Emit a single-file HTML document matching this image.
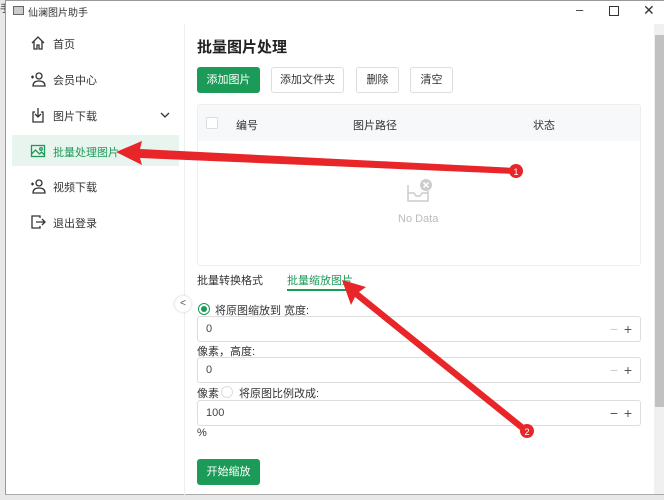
<!DOCTYPE html>
<html><head><meta charset="utf-8"><style>
*{margin:0;padding:0;box-sizing:border-box}
body{width:664px;height:500px;overflow:hidden;background:#e8e8e8;font-family:"Liberation Sans","Noto Sans CJK SC",sans-serif;position:relative;font-size:11px;color:#333}
.a{position:absolute}
.win{left:5px;top:0;width:659px;height:495px;background:#fff;border-left:1px solid #999;border-top:1px solid #999;border-bottom:1px solid #aaa}
.nav{left:30px;font-size:11px;color:#333}
.btn{position:absolute;top:67px;height:26px;border:1px solid #ddd;border-radius:3px;background:#fff;font-size:11px;line-height:24px;text-align:center;color:#333}
.inp{position:absolute;left:197px;width:444px;height:26px;border:1px solid #ddd;border-radius:3px;background:#fff;font-size:11px;line-height:24px;padding-left:8px;color:#444}
.inp span{position:absolute;right:8px;top:0;font-size:14px;color:#555}
.lbl{position:absolute;left:197px;font-size:11px;color:#333}
svg.i{position:absolute;width:16px;height:16px;fill:none;stroke:#333;stroke-width:1.3}
</style></head><body>
<div class="a" style="left:0;top:0;font-size:10px;color:#333">手</div>
<div class="a win"></div>
<div class="a" style="left:13px;top:6px;width:11px;height:9px;border:1px solid #666;background:#ccc"></div>
<div class="a" style="left:28px;top:4px;font-size:10px;color:#333">仙澜图片助手</div>
<div class="a" style="left:576px;top:2px;font-size:13px;color:#333">–</div>
<div class="a" style="left:609px;top:6px;width:10px;height:10px;border:1px solid #333"></div>
<div class="a" style="left:643px;top:2px;font-size:14px;color:#333">✕</div>
<div class="a" style="left:184px;top:24px;width:1px;height:471px;background:#eee"></div>
<div class="a" style="left:12px;top:135px;width:167px;height:31px;background:#e8f4ee"></div>
<svg class="i" style="left:30px;top:35px" viewBox="0 0 16 16"><path d="M2 8L8 2l6 6M4 6.5V14h3v-4h2v4h3V6.5"/></svg>
<div class="a nav" style="left:53px;top:36px">首页</div>
<svg class="i" style="left:30px;top:71px" viewBox="0 0 16 16"><circle cx="9" cy="5" r="3"/><path d="M3 15c0-4 3-5 6-5s6 1 6 5zM1 6h3M2.5 4.5v3"/></svg>
<div class="a nav" style="left:53px;top:72px">会员中心</div>
<svg class="i" style="left:30px;top:107px" viewBox="0 0 16 16"><path d="M5 5H3v10h10V5h-2M8 1v9M5 7l3 3 3-3"/></svg>
<div class="a nav" style="left:53px;top:108px">图片下载</div>
<svg class="i" style="left:159px;top:109px;width:12px;height:12px" viewBox="0 0 12 12"><path d="M2 4l4 4 4-4"/></svg>
<svg class="i" style="left:30px;top:143px;stroke:#1b9b57" viewBox="0 0 16 16"><rect x="1.5" y="2.5" width="13" height="11"/><circle cx="11" cy="6" r="1.3"/><path d="M1.5 11l4-4 4 4 2-2 3 3"/></svg>
<div class="a nav" style="left:53px;top:144px;color:#1b9b57">批量处理图片</div>
<svg class="i" style="left:30px;top:178px" viewBox="0 0 16 16"><circle cx="9" cy="5" r="3"/><path d="M3 15c0-4 3-5 6-5s6 1 6 5zM1 6h3M2.5 4.5v3"/></svg>
<div class="a nav" style="left:53px;top:179px">视频下载</div>
<svg class="i" style="left:30px;top:214px" viewBox="0 0 16 16"><path d="M10 4V2H2v12h8v-2M6 8h9M12 5l3 3-3 3"/></svg>
<div class="a nav" style="left:53px;top:215px">退出登录</div>
<div class="a" style="left:197px;top:36px;font-size:15px;font-weight:bold;color:#222">批量图片处理</div>
<div class="btn" style="left:197px;width:63px;background:#1b9b57;border-color:#1b9b57;color:#fff">添加图片</div>
<div class="btn" style="left:271px;width:73px">添加文件夹</div>
<div class="btn" style="left:356px;width:43px">删除</div>
<div class="btn" style="left:410px;width:43px">清空</div>
<div class="a" style="left:197px;top:104px;width:444px;height:162px;border:1px solid #eee;border-radius:3px"></div>
<div class="a" style="left:198px;top:105px;width:442px;height:36px;background:#f7f8fa"></div>
<div class="a" style="left:206px;top:117px;width:12px;height:12px;border:1px solid #ddd;background:#fff;border-radius:2px"></div>
<div class="a" style="left:236px;top:117px">编号</div>
<div class="a" style="left:353px;top:117px">图片路径</div>
<div class="a" style="left:533px;top:117px">状态</div>
<svg class="a" style="left:406px;top:177px" width="28" height="28" viewBox="0 0 28 28" fill="none" stroke="#ccc" stroke-width="1.5"><path d="M2 8v16h20V14M2 16h6l2 3h4l2-3h6"/><circle cx="20" cy="8" r="6" fill="#ccc" stroke="none"/><path d="M17.5 5.5l5 5M22.5 5.5l-5 5" stroke="#fff"/></svg>
<div class="a" style="left:398px;top:213px;color:#bbb;font-size:11px">No Data</div>
<div class="a" style="left:197px;top:272px">批量转换格式</div>
<div class="a" style="left:287px;top:272px;color:#1b9b57">批量缩放图片</div>
<div class="a" style="left:287px;top:289px;width:63px;height:2px;background:#1b9b57"></div>
<div class="a" style="left:175px;top:296px;width:16px;height:16px;border-radius:8px;background:#fff;box-shadow:0 0 3px #ccc;font-size:10px;line-height:16px;text-align:center;color:#555">&lt;</div>
<div class="a" style="left:198px;top:303px;width:12px;height:12px;border:1px solid #1b9b57;border-radius:6px"><div style="margin:2px;width:6px;height:6px;border-radius:3px;background:#1b9b57"></div></div>
<div class="lbl" style="left:215px;top:302px">将原图缩放到 宽度:</div>
<div class="inp" style="top:316px">0<span><span style="right:14px;color:#ccc">−</span>+</span></div>
<div class="lbl" style="top:343px">像素，高度:</div>
<div class="inp" style="top:357px">0<span><span style="right:14px;color:#ccc">−</span>+</span></div>
<div class="lbl" style="top:385px">像素</div>
<div class="a" style="left:221px;top:386px;width:12px;height:12px;border:1px solid #ddd;border-radius:6px"></div>
<div class="lbl" style="left:239px;top:385px">将原图比例改成:</div>
<div class="inp" style="top:400px">100<span><span style="right:14px">−</span>+</span></div>
<div class="lbl" style="top:427px">%</div>
<div class="btn" style="left:197px;top:459px;width:63px;background:#1b9b57;border-color:#1b9b57;color:#fff">开始缩放</div>
<div class="a" style="left:654px;top:24px;width:10px;height:470px;background:#f0f0f0"></div>
<div class="a" style="left:655px;top:35px;width:9px;height:372px;background:#c1c1c1"></div>
<svg class="a" style="left:0;top:0" width="664" height="500">
<polygon points="116,152 142,141 140,149 516,168 516,174 140,158 142,165" fill="#e8262a"/>
<circle cx="516" cy="171" r="7" fill="#e8262a"/>
<text x="516" y="175" font-size="9" fill="#fff" text-anchor="middle" font-family="Liberation Sans">1</text>
<polygon points="342,280 366,287 359,292 529,429 525,434 355,297 351,305" fill="#e8262a"/>
<circle cx="527" cy="431" r="7" fill="#e8262a"/>
<text x="527" y="435" font-size="9" fill="#fff" text-anchor="middle" font-family="Liberation Sans">2</text>
</svg>
</body></html>
